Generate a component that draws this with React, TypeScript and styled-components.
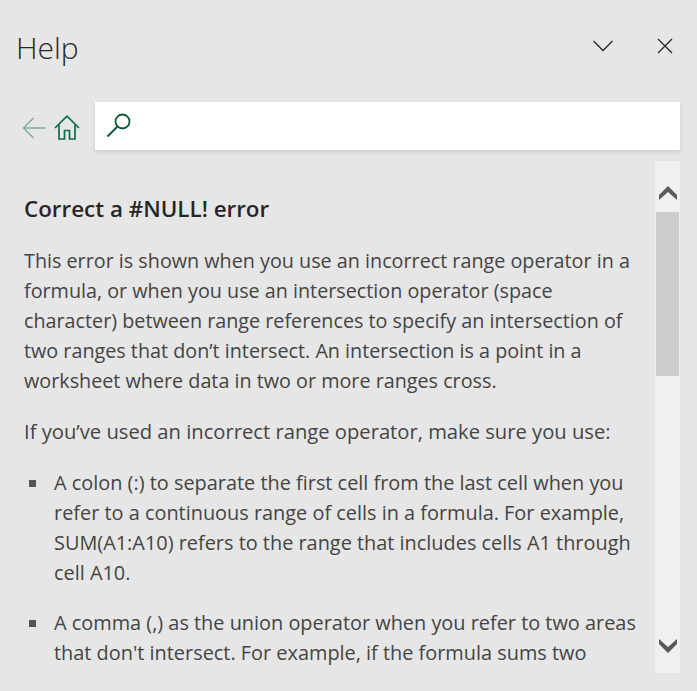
import React from "react";
import styled, { createGlobalStyle } from "styled-components";

const Global = createGlobalStyle`
  html, body { margin: 0; padding: 0; background: #e6e6e6; }
  * { box-sizing: border-box; }
`;

const Panel = styled.div`
  width: 697px;
  height: 691px;
  overflow: hidden;
  background: #e6e6e6;
  display: flex;
  flex-direction: column;
  font-family: "Open Sans", "Noto Sans", sans-serif;
`;

const Header = styled.header`
  height: 102px;
  flex: none;
  display: flex;
  align-items: flex-start;
  justify-content: space-between;
  padding: 27px 24px 0 16px;
`;

const Title = styled.h1`
  margin: 0;
  font-size: 30px;
  line-height: 42px;
  font-weight: 300;
  color: #262626;
`;

const HeaderActions = styled.div`
  display: flex;
  align-items: center;
  gap: 44px;
  padding-top: 11px;
`;

const Toolbar = styled.div`
  height: 48px;
  flex: none;
  display: flex;
  align-items: center;
  padding: 0 17px 0 22px;
`;

const NavIcons = styled.div`
  width: 73px;
  display: flex;
  align-items: center;
  gap: 8px;
  padding-top: 3px;
`;

const SearchBox = styled.div`
  flex: 1;
  height: 48px;
  background: #fff;
  box-shadow: 0 2px 4px rgba(0, 0, 0, 0.12);
  display: flex;
  align-items: center;
  padding: 0 0 2px 11px;
`;

const Body = styled.div`
  flex: 1;
  min-height: 0;
  display: flex;
  padding: 11px 17px 18px 24px;
`;

const Article = styled.article`
  flex: 1;
  min-width: 0;
  overflow: hidden;
  padding-top: 32px;
  font-size: 19.9px;
  line-height: 30px;
  color: #444;
`;

const Heading = styled.h2`
  margin: 0 0 22px;
  font-size: 22.4px;
  line-height: 31px;
  font-weight: 600;
  color: #262626;
`;

const Para = styled.p<{ $size: number }>`
  margin: 0 0 20px;
  width: 612px;
  font-size: ${(p) => p.$size}px;
`;

const BulletList = styled.ul`
  margin: 0;
  padding: 2px 0 0 30px;
  list-style: none;
  width: 624px;
`;

const Bullet = styled.li`
  position: relative;
  margin-bottom: 20px;
  &::before {
    content: "";
    position: absolute;
    left: -25px;
    top: 12px;
    width: 7px;
    height: 7px;
    background: #555;
  }
`;

const ScrollTrack = styled.div`
  width: 25px;
  flex: none;
  background: #f0f0f0;
  display: flex;
  flex-direction: column;
  align-items: center;
`;

const ScrollButton = styled.div<{ $down?: boolean }>`
  height: 51px;
  width: 100%;
  flex: none;
  display: flex;
  align-items: center;
  justify-content: center;
  padding: ${(p) => (p.$down ? "0 0 3px" : "13px 0 0")};
`;

const ScrollThumb = styled.div`
  width: 23px;
  height: 164px;
  flex: none;
  background: #cdcdcd;
`;

const ScrollSpacer = styled.div`
  flex: 1;
`;

const App: React.FC = () => (
  <Panel>
    <Global />
    <Header>
      <Title>Help</Title>
      <HeaderActions>
        <svg width="20" height="12" viewBox="0 0 20 12" fill="none" stroke="#262626" strokeWidth="1.3">
          <path d="M0.5 1l9.5 9.5L19.5 1" />
        </svg>
        <svg width="16" height="16" viewBox="0 0 16 16" fill="none" stroke="#262626" strokeWidth="1.3">
          <path d="M1 1l14 14M15 1L1 15" />
        </svg>
      </HeaderActions>
    </Header>
    <Toolbar>
      <NavIcons>
        <svg width="24" height="22" viewBox="0 0 24 22" fill="none" stroke="#82ab9b" strokeWidth="1.5">
          <path d="M23.5 11H1.5M11.5 1L1.5 11l10 10" />
        </svg>
        <svg width="26" height="25" viewBox="0 0 26 25" fill="none" stroke="#0f6b50" strokeWidth="1.7">
          <path d="M1 13L13 1.2 25 13" />
          <path d="M5 9.5V24h5.5v-8.5h5V24H21V9.5" />
        </svg>
      </NavIcons>
      <SearchBox>
        <svg width="26" height="26" viewBox="0 0 26 26" fill="none" stroke="#0f5c36" strokeWidth="1.8">
          <circle cx="16.5" cy="9.5" r="7" />
          <path d="M11.5 14.5L1.5 24.5" strokeWidth="2" />
        </svg>
      </SearchBox>
    </Toolbar>
    <Body>
      <Article>
        <Heading>Correct a #NULL! error</Heading>
        <Para $size={19.75}>
          This error is shown when you use an incorrect range operator in a formula, or when you use an
          intersection operator (space character) between range references to specify an intersection of
          two ranges that don’t intersect. An intersection is a point in a worksheet where data in two or
          more ranges cross.
        </Para>
        <Para $size={20.2}>If you’ve used an incorrect range operator, make sure you use:</Para>
        <BulletList>
          <Bullet>
            A colon (:) to separate the first cell from the last cell when you refer to a continuous range
            of cells in a formula. For example, SUM(A1:A10) refers to the range that includes cells A1
            through cell A10.
          </Bullet>
          <Bullet>
            A comma (,) as the union operator when you refer to two areas that don't intersect. For example,
            if the formula sums two
          </Bullet>
        </BulletList>
      </Article>
      <ScrollTrack>
        <ScrollButton>
          <svg width="18" height="14" viewBox="0 0 18 14" fill="#5a5a5a">
            <path d="M9 0l9 9v5L9 6 0 14V9z" />
          </svg>
        </ScrollButton>
        <ScrollThumb />
        <ScrollSpacer />
        <ScrollButton $down>
          <svg width="18" height="14" viewBox="0 0 18 14" fill="#5a5a5a">
            <path d="M9 14L0 5V0l9 8 9-8v5z" />
          </svg>
        </ScrollButton>
      </ScrollTrack>
    </Body>
  </Panel>
);

export default App;
